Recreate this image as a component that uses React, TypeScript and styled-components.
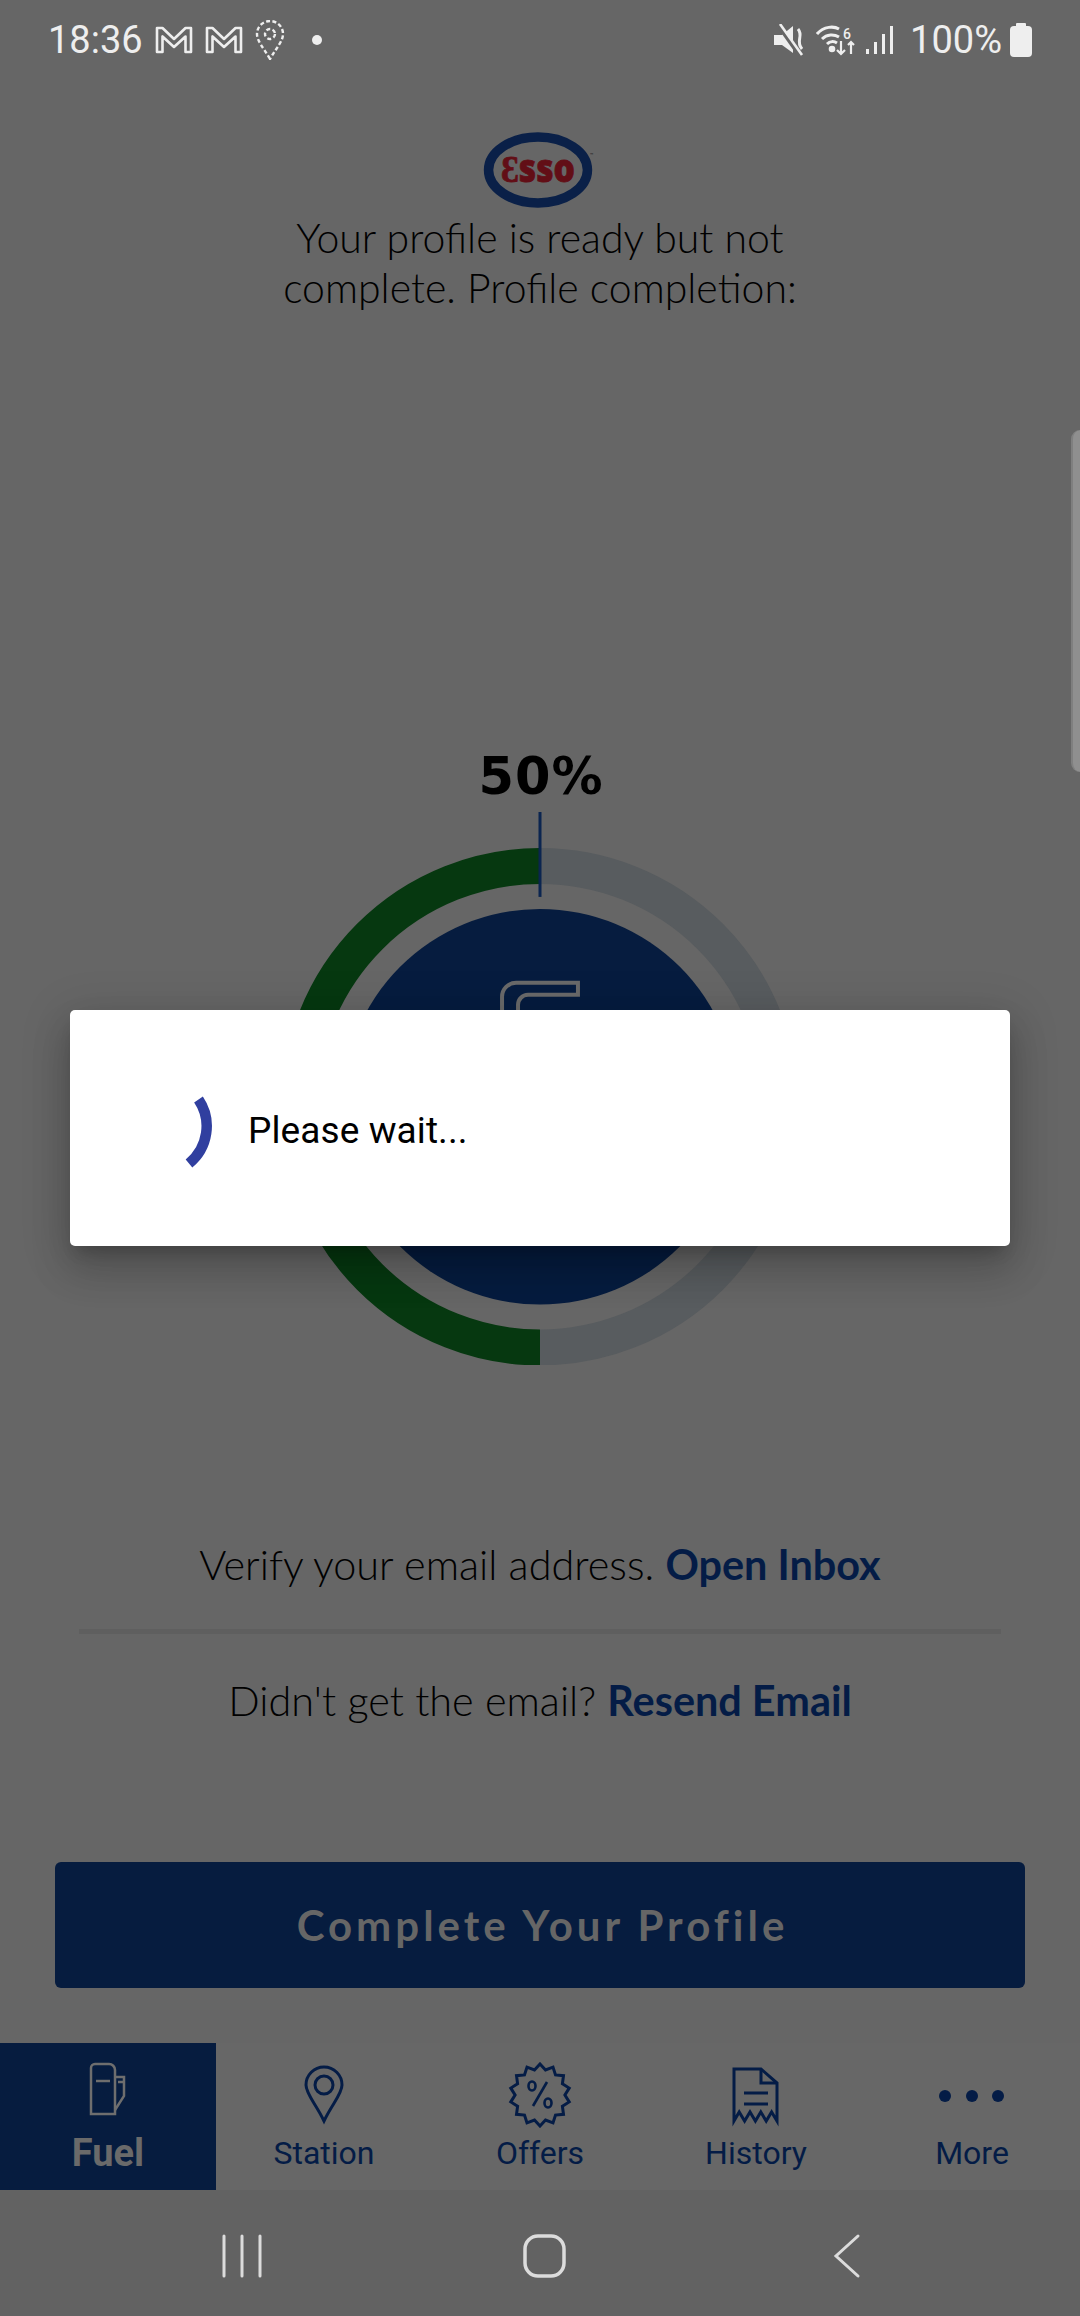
import React from 'react';
import styled, { createGlobalStyle } from 'styled-components';

const NAVY = '#061c3f';
const INK = '#041c46';

const Global = createGlobalStyle`
  html, body { margin: 0; padding: 0; background: #666666; }
  * { box-sizing: border-box; }
`;

const Page = styled.div`
  position: relative;
  width: 1080px;
  height: 2316px;
  overflow: hidden;
  display: flex;
  flex-direction: column;
  align-items: center;
  background: #666666;
  font-family: Lato, "Liberation Sans", sans-serif;
`;

const StatusBar = styled.div`
  width: 100%;
  height: 80px;
  padding: 0 48px;
  display: flex;
  align-items: center;
  justify-content: space-between;
  color: #eeeeee;
  font-family: Roboto, sans-serif;
  font-size: 38px;
`;
const StatusGroup = styled.div<{ $gap: number }>`
  display: flex;
  align-items: center;
  gap: ${(p) => p.$gap}px;
`;
const Dot = styled.span`
  width: 10px;
  height: 10px;
  margin-left: 15px;
  border-radius: 50%;
  background: #eeeeee;
`;
const BatteryText = styled.span`
  margin-left: 8px;
`;
const Logo = styled.svg`
  margin-top: 52px;
  display: block;
`;
const Headline = styled.h1`
  margin: 5px 0 0;
  font-size: 41px;
  line-height: 50px;
  font-weight: 300;
  text-align: center;
  color: #000000;
  letter-spacing: 0;
`;
const Percent = styled.div`
  margin-top: 434px;
  height: 60px;
  font-family: "DejaVu Sans", sans-serif;
  font-weight: 700;
  font-size: 51px;
  line-height: 60px;
  letter-spacing: 1px;
  padding-left: 2px;
  color: #000000;
`;
const Ring = styled.svg`
  margin-top: 5px;
  display: block;
`;
const InfoLine = styled.div<{ $top: number }>`
  margin-top: ${(p) => p.$top}px;
  height: 60px;
  font-size: 41.4px;
  line-height: 60px;
  font-weight: 300;
  color: #000000;
  white-space: nowrap;
`;
const LinkText = styled.span`
  font-weight: 700;
  color: ${INK};
`;
const Divider = styled.div`
  width: 922px;
  height: 5px;
  margin-top: 35px;
  background: #5f5f5f;
`;
const ActionButton = styled.div`
  width: 970px;
  height: 126px;
  margin-top: 132px;
  padding-left: 5px;
  border-radius: 6px;
  background: ${NAVY};
  color: #666666;
  display: flex;
  align-items: center;
  justify-content: center;
  font-size: 42px;
  font-weight: 700;
  letter-spacing: 4px;
`;
const TabBar = styled.div`
  width: 100%;
  height: 147px;
  margin-top: 55px;
  display: grid;
  grid-template-columns: repeat(5, 1fr);
  background: #676767;
`;
const Tab = styled.div<{ $active?: boolean }>`
  padding-top: 19px;
  display: flex;
  flex-direction: column;
  align-items: center;
  background: ${(p) => (p.$active ? NAVY : 'transparent')};
`;
const TabIcon = styled.svg`
  display: block;
  width: 70px;
  height: 66px;
`;
const TabLabel = styled.div<{ $active?: boolean }>`
  margin-top: 5px;
  font-family: Roboto, sans-serif;
  font-size: ${(p) => (p.$active ? 38 : 32)}px;
  line-height: 40px;
  font-weight: ${(p) => (p.$active ? 700 : 400)};
  color: ${(p) => (p.$active ? '#6a6a6a' : INK)};
`;
const NavBar = styled.div`
  flex: 1;
  width: 100%;
  background: #626262;
  display: grid;
  grid-template-columns: 1fr;
  align-items: center;
`;
const NavIcons = styled.svg`
  display: block;
`;
const ScrollThumb = styled.div`
  position: absolute;
  top: 430px;
  right: 0;
  width: 9px;
  height: 342px;
  border-radius: 9px 0 0 9px;
  background: #8f8f8f;
  border-left: 2px solid #7f7f7f;
`;
const Dialog = styled.div`
  position: absolute;
  left: 70px;
  top: 1010px;
  width: 940px;
  height: 236px;
  padding-left: 110px;
  display: flex;
  align-items: center;
  gap: 34px;
  border-radius: 5px;
  background: #ffffff;
  box-shadow: 0 11px 15px -7px rgba(0,0,0,.2), 0 24px 38px 3px rgba(0,0,0,.14), 0 9px 46px 8px rgba(0,0,0,.12);
`;
const DialogText = styled.div`
  margin-top: 5px;
  font-family: Roboto, sans-serif;
  font-size: 37px;
  letter-spacing: 0.1px;
  color: #000000;
`;

const burst = (() => {
  const pts: string[] = [];
  const n = 14;
  for (let i = 0; i < n * 2; i++) {
    const a = (Math.PI * i) / n - Math.PI / 2;
    const r = i % 2 === 0 ? 1 : 0.83;
    pts.push(`${(35 + 30 * r * Math.cos(a)).toFixed(1)},${(33 + 31 * r * Math.sin(a)).toFixed(1)}`);
  }
  return pts.join(' ');
})();

const MailIcon = () => (
  <svg width="38" height="28" viewBox="0 0 38 28" fill="none" stroke="#eee" strokeWidth="2.6">
    <path d="M2 2h5.5L19 13 30.5 2H36v24h-5.5V10.5L19 21 7.5 10.5V26H2z" strokeLinejoin="round" />
  </svg>
);

export default function App() {
  return (
    <Page>
      <Global />
      <StatusBar>
        <StatusGroup $gap={12}>
          <span>18:36</span>
          <MailIcon />
          <MailIcon />
          <svg width="30" height="40" viewBox="0 0 30 40" fill="none" stroke="#eee" strokeWidth="2.4" strokeDasharray="4 2.4">
            <path d="M15 39C8 27 2 21 2 14a13 13 0 0 1 26 0c0 7-6 13-13 25z" />
            <circle cx="15" cy="14" r="5" />
          </svg>
          <Dot />
        </StatusGroup>
        <StatusGroup $gap={8}>
          <svg width="34" height="32" viewBox="0 0 34 32" fill="#eee">
            <path d="M0 11h8l11-9v27L8 21H0z" />
            <path d="M3 0l22 31" stroke="#666" strokeWidth="3.5" />
            <path d="M6 0l22 31" stroke="#eee" strokeWidth="2.6" />
            <path d="M24 5c6 7-3 12 4 20" fill="none" stroke="#eee" strokeWidth="3" />
          </svg>
          <svg width="42" height="32" viewBox="0 0 42 32" fill="none" stroke="#eee" strokeWidth="3">
            <path d="M1 10c7-8 17-8 22-5" />
            <path d="M6 15c5-5 12-5 17-2" />
            <path d="M11 20c3-3 7-3 10-1" />
            <circle cx="16" cy="25" r="1.8" fill="#eee" />
            <path d="M25 17v13m-4-4l4 4 4-4M35 30V18m-3 3l3-3 3 3" strokeWidth="2.2" />
            <text x="27" y="15" fontFamily="Roboto" fontSize="14" fontWeight="500" fill="#eee" stroke="none">6</text>
          </svg>
          <svg width="28" height="30" viewBox="0 0 28 30" fill="#eee">
            <rect x="0" y="24" width="3" height="5" />
            <rect x="8" y="17" width="3" height="12" />
            <rect x="16" y="9" width="3" height="20" />
            <rect x="24" y="1" width="3" height="28" />
          </svg>
          <BatteryText>100%</BatteryText>
          <svg width="22" height="34" viewBox="0 0 22 34" fill="#eee">
            <rect x="6" y="0" width="10" height="4" rx="1" />
            <rect x="0" y="3" width="22" height="31" rx="4" />
          </svg>
        </StatusGroup>
      </StatusBar>

      <Logo width="116" height="76" viewBox="0 0 116 76">
        <ellipse cx="56" cy="38" rx="49.5" ry="33" fill="none" stroke="#0a2048" strokeWidth="9.5" />
        <text x="56" y="50" textAnchor="middle" textLength="74" lengthAdjust="spacingAndGlyphs" fontFamily="Open Sans" fontWeight="800" fontSize="39" fill="#620e16" stroke="#620e16" strokeWidth="0.8">Ɛsso</text>
        <text x="108" y="25" fontFamily="Roboto" fontSize="6" fill="#222">™</text>
      </Logo>

      <Headline>
        Your profile is ready but not
        <br />
        complete. Profile completion:
      </Headline>

      <Percent>50%</Percent>

      <Ring width="540" height="554" viewBox="0 0 540 554">
        <path d="M270 54a241 241 0 0 1 0 482" fill="none" stroke="#585c5f" strokeWidth="36" />
        <path d="M270 54a241 241 0 0 0 0 482" fill="none" stroke="#063810" strokeWidth="36" />
        <circle cx="270" cy="295" r="198" fill={NAVY} />
        <rect x="268.5" y="0" width="3" height="85" fill="#0b2550" />
        <path d="M232 205v-20a14 14 0 0 1 14-14h62v12h-50a10 10 0 0 0-10 10v20" fill="none" stroke="#6a6a6a" strokeWidth="4" />
      </Ring>

      <InfoLine $top={169}>
        Verify your email address. <LinkText>Open Inbox</LinkText>
      </InfoLine>
      <Divider />
      <InfoLine $top={36}>
        Didn't get the email? <LinkText>Resend Email</LinkText>
      </InfoLine>

      <ActionButton>Complete Your Profile</ActionButton>

      <TabBar>
        <Tab $active>
          <TabIcon viewBox="0 0 70 66" fill="none" stroke="#6e6e6e" strokeWidth="2.5">
            <path d="M18 52V6a4 4 0 0 1 4-4h14a6 6 0 0 1 6 6v44z" />
            <path d="M23 19h14M42 15h9v19l-9 14" />
            <path d="M45 20h6" />
          </TabIcon>
          <TabLabel $active>Fuel</TabLabel>
        </Tab>
        <Tab>
          <TabIcon viewBox="0 0 70 66" fill="none" stroke={INK} strokeWidth="3">
            <path d="M35 59C27 42 17 32 17 23a18 18 0 0 1 36 0c0 9-10 19-18 36z" />
            <circle cx="35" cy="23" r="9" />
          </TabIcon>
          <TabLabel>Station</TabLabel>
        </Tab>
        <Tab>
          <TabIcon viewBox="0 0 70 66" fill="none" stroke={INK} strokeWidth="3">
            <polygon points={burst} />
            <path d="M28 44l14-24" strokeWidth="2.6" />
            <ellipse cx="27" cy="24" rx="3.5" ry="4.5" strokeWidth="2.6" />
            <ellipse cx="43" cy="41" rx="3.5" ry="4.5" strokeWidth="2.6" />
          </TabIcon>
          <TabLabel>Offers</TabLabel>
        </Tab>
        <Tab>
          <TabIcon viewBox="0 0 70 66" fill="none" stroke={INK} strokeWidth="3">
            <path d="M13 59V7h27l16 14v38l-5.4-9-5.4 9-5.4-9-5.4 9-5.4-9-5.4 9-5.4-9z" strokeLinejoin="miter" />
            <path d="M40 7v14h16M23 31h24M23 42h24" />
          </TabIcon>
          <TabLabel>History</TabLabel>
        </Tab>
        <Tab>
          <TabIcon viewBox="0 0 70 66" fill={INK}>
            <circle cx="8" cy="34" r="6" />
            <circle cx="35" cy="34" r="6" />
            <circle cx="61" cy="34" r="6" />
          </TabIcon>
          <TabLabel>More</TabLabel>
        </Tab>
      </TabBar>

      <NavBar>
        <NavIcons width="1080" height="126" viewBox="0 0 1080 126" fill="none" stroke="#dcdcdc" strokeWidth="3" strokeLinecap="round">
          <path d="M224 46v40M242 46v40M260 46v40" />
          <rect x="525" y="46" width="39" height="40" rx="13" strokeWidth="3.5" />
          <path d="M858 46l-22 20 22 20" />
        </NavIcons>
      </NavBar>

      <ScrollThumb />

      <Dialog>
        <svg width="34" height="84" viewBox="0 0 34 84" fill="none" stroke="#303f9f" strokeWidth="10.5">
          <path d="M18.5 13.5A48 48 0 0 1 9 77.5" />
        </svg>
        <DialogText>Please wait...</DialogText>
      </Dialog>
    </Page>
  );
}
